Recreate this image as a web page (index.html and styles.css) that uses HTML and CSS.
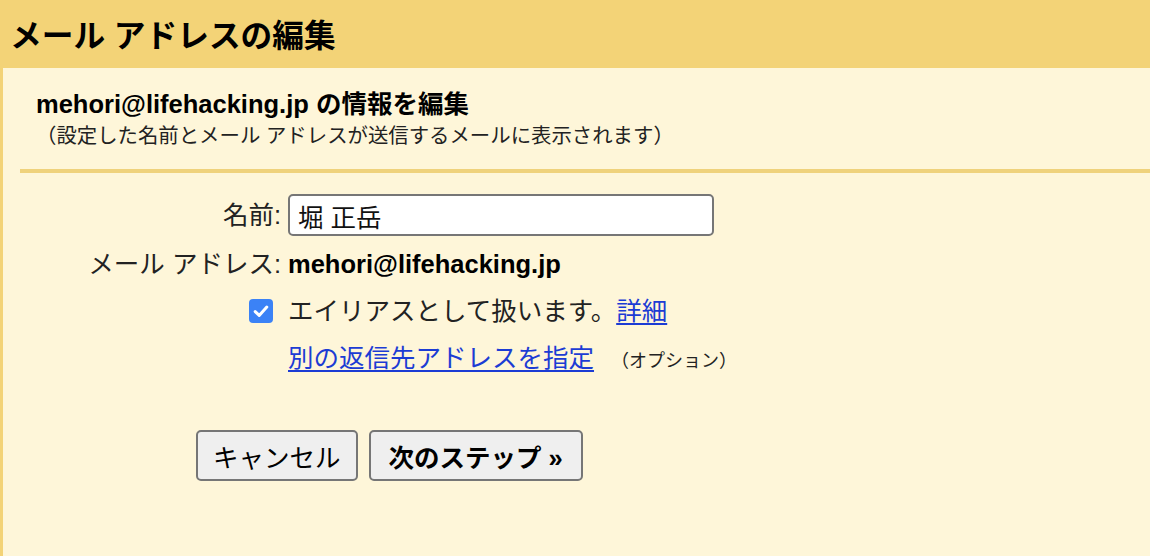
FILE: index.html
```html
<!DOCTYPE html>
<html lang="ja">
<head>
<meta charset="utf-8">
<title>メール アドレスの編集</title>
<link rel="stylesheet" href="styles.css">
</head>
<body>
<header class="topbar">
  <h1 class="title">メール アドレスの編集</h1>
</header>
<main class="panel">
  <section class="info">
    <h2 class="info-head"><span class="latin">mehori@lifehacking.jp</span> の情報を編集</h2>
    <p class="info-sub">（設定した名前とメール アドレスが送信するメールに表示されます）</p>
  </section>
  <form class="form">
    <label class="label" for="name">名前:</label>
    <div class="value"><input id="name" class="text-input" type="text" value="堀 正岳"></div>

    <div class="label">メール アドレス:</div>
    <div class="value"><b class="latin">mehori@lifehacking.jp</b></div>

    <div class="label label-check">
      <span class="checkbox" aria-checked="true" role="checkbox">
        <svg width="24" height="24" viewBox="0 0 24 24"><rect x="0" y="0" width="24" height="24" rx="4" fill="#3b82f6"/><path d="M6.2 12.6 L10.2 16.4 L17.8 8" fill="none" stroke="#fff" stroke-width="3" stroke-linecap="round" stroke-linejoin="round"/></svg>
      </span>
    </div>
    <div class="value">エイリアスとして扱います。<a href="#" class="link">詳細</a></div>

    <div class="label"></div>
    <div class="value"><a href="#" class="link">別の返信先アドレスを指定</a> <span class="opt">（オプション）</span></div>
  </form>
  <div class="actions">
    <button type="button" class="btn">キャンセル</button>
    <button type="button" class="btn btn-primary">次のステップ »</button>
  </div>
</main>
</body>
</html>
```
FILE: styles.css
```css
html, body {
  margin: 0;
  padding: 0;
}
body {
  background: #fef6d9;
  font-family: "Liberation Sans", "Noto Sans CJK JP", sans-serif;
  color: #111;
}
.topbar {
  height: 68px;
  background: #f3d377;
  display: flex;
  align-items: center;
  padding-left: 10px;
  box-sizing: border-box;
  padding-top: 5px;
}
.title {
  margin: 0;
  font-size: 31.7px;
  font-weight: bold;
  color: #000;
  line-height: 1;
}
.panel {
  border-left: 3px solid #f3d377;
  min-height: calc(100vh - 68px);
  box-sizing: border-box;
  padding: 21px 0 0 17px;
}
.info {
  padding: 0 0 20px 16px;
  border-bottom: 4px solid #efd27c;
}
.info-head {
  margin: 0;
  font-size: 25.5px;
  line-height: 30px;
  font-weight: bold;
  color: #000;
}
.info-sub {
  margin: 4px 0 0;
  font-size: 20.4px;
  line-height: 26px;
  color: #222;
}
.form {
  display: grid;
  grid-template-columns: 261px 1fr;
  column-gap: 7px;
  margin-top: 21px;
  font-size: 25.5px;
  line-height: 30px;
  color: #222;
}
.label {
  text-align: right;
  align-self: center;
}
.value {
  align-self: center;
}
.form > :nth-child(3), .form > :nth-child(4) { margin-top: 13px; }
.form > :nth-child(5), .form > :nth-child(6) { margin-top: 17px; }
.form > :nth-child(7), .form > :nth-child(8) { margin-top: 17px; }
.value b {
  color: #000;
}
.text-input {
  display: block;
  width: 426px;
  height: 42px;
  box-sizing: border-box;
  border: 2px solid #767676;
  border-radius: 5px;
  background: #fff;
  padding: 0 8px;
  font-family: "Liberation Sans", "Noto Sans CJK JP", sans-serif;
  font-size: 25.5px;
  color: #111;
  outline: none;
}
.label-check {
  display: flex;
  justify-content: flex-end;
  align-items: center;
  padding-right: 8px;
}
.checkbox {
  display: block;
  width: 24px;
  height: 24px;
}
.checkbox svg {
  display: block;
}
.link {
  color: #1c3cd4;
  text-decoration: underline;
  text-underline-offset: 3px;
}
.opt {
  font-size: 18px;
  margin-left: 10px;
}
.actions {
  display: flex;
  gap: 11px;
  margin: 54px 0 0 176px;
}
.btn {
  height: 51px;
  box-sizing: border-box;
  border: 2px solid #767676;
  border-radius: 5px;
  background: #efefef;
  padding: 0 15px;
  font-family: "Liberation Sans", "Noto Sans CJK JP", sans-serif;
  font-size: 25.5px;
  color: #000;
}
.btn-primary {
  font-weight: bold;
  padding: 0 18px;
}
```
